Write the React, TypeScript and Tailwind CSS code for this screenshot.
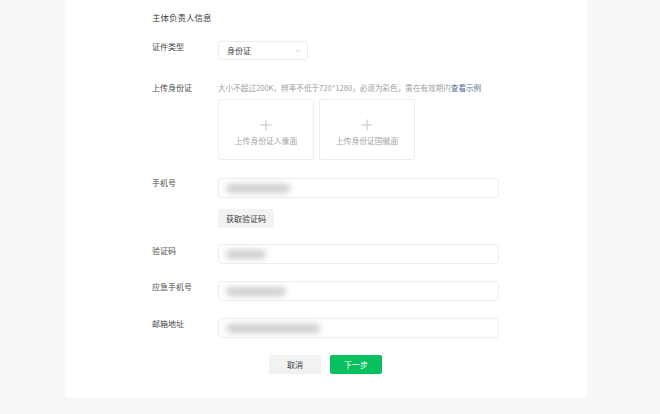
import React from "react";

const FONT = { fontFamily: '"Noto Sans CJK SC", "Noto Sans", sans-serif' };

function Label({ children }: { children: React.ReactNode }) {
    return <div className="w-[66px] shrink-0 text-[8px] leading-[12px] text-[#4a4a4a]">{children}</div>;
}

function BlurInput({ blob }: { blob: string }) {
    return (
        <div className="relative h-[20px] w-[281px] overflow-hidden rounded-[4px] border border-[#ededed] bg-white">
            <div className={`absolute left-[7px] top-[5px] h-[9px] rounded-full bg-[#cdcdcd] blur-[3px] ${blob}`} />
        </div>
    );
}

function UploadBox({ text }: { text: string }) {
    return (
        <div className="flex h-[61px] w-[96px] flex-col items-center rounded-[2px] border border-[#eeeeee] bg-white pt-[19px]">
            <svg width="12" height="12" viewBox="0 0 12 12" className="mb-[4px]">
                <path d="M6 0.5V11.5M0.5 6H11.5" stroke="#c4c4c4" strokeWidth="1" />
            </svg>
            <div className="text-[7.8px] leading-[12px] text-[#a5a5a5]">{text}</div>
        </div>
    );
}

export default function App() {
    return (
        <div className="h-[414px] w-[660px] overflow-hidden bg-[#f7f8fa]" style={FONT}>
            <div className="ml-[65px] flex h-[397px] w-[522px] flex-col bg-white pl-[87px] pt-[11px]">
                {/* Title */}
                <div className="text-[8.5px] leading-[12px] text-[#3a3a3a]">主体负责人信息</div>

                {/* ID type */}
                <div className="mt-[18px] flex items-start">
                    <Label>证件类型</Label>
                    <div className="flex h-[19px] w-[90px] items-center justify-between rounded-[3px] border border-[#ececec] pl-[8px] pr-[6px]">
                        <span className="text-[8px] leading-[12px] text-[#3a3a3a]">身份证</span>
                        <svg width="6" height="4" viewBox="0 0 6 4">
                            <path d="M0.5 0.5L3 3L5.5 0.5" fill="none" stroke="#c8c8c8" strokeWidth="0.8" />
                        </svg>
                    </div>
                </div>

                {/* Upload */}
                <div className="mt-[22px] flex items-start">
                    <Label>上传身份证</Label>
                    <div className="flex flex-col">
                        <div className="text-[7.6px] leading-[12px] whitespace-nowrap text-[#a0a0a0]">
                            大小不超过200K，辨率不低于720*1280，必须为彩色，需在有效期内
                            <span className="text-[#576b95]">查看示例</span>
                        </div>
                        <div className="mt-[5px] flex gap-[5px]">
                            <UploadBox text="上传身份证人像面" />
                            <UploadBox text="上传身份证国徽面" />
                        </div>
                    </div>
                </div>

                {/* Phone */}
                <div className="mt-[17px] flex items-start">
                    <Label>手机号</Label>
                    <div className="mt-[1px] flex flex-col items-start">
                        <BlurInput blob="w-[64px]" />
                        <button className="mt-[11px] h-[19px] w-[56px] rounded-[2px] bg-[#f2f2f2] text-[8px] leading-[12px] text-[#3a3a3a]">
                            获取验证码
                        </button>
                    </div>
                </div>

                {/* Code */}
                <div className="mt-[17px] flex items-start">
                    <Label>验证码</Label>
                    <div className="-mt-[1px]">
                        <BlurInput blob="w-[40px]" />
                    </div>
                </div>

                {/* Emergency phone */}
                <div className="mt-[17px] flex items-start">
                    <Label>应急手机号</Label>
                    <BlurInput blob="w-[60px]" />
                </div>

                {/* Email */}
                <div className="mt-[17px] flex items-start">
                    <Label>邮箱地址</Label>
                    <BlurInput blob="w-[94px]" />
                </div>

                {/* Actions */}
                <div className="mt-[17px] flex gap-[9px] pl-[117px]">
                    <button className="h-[19px] w-[52px] rounded-[2px] bg-[#f2f2f2] text-[8px] leading-[12px] text-[#3a3a3a]">
                        取消
                    </button>
                    <button className="h-[19px] w-[52px] rounded-[2px] bg-[#07c160] text-[8px] leading-[12px] text-white">
                        下一步
                    </button>
                </div>
            </div>
        </div>
    );
}
